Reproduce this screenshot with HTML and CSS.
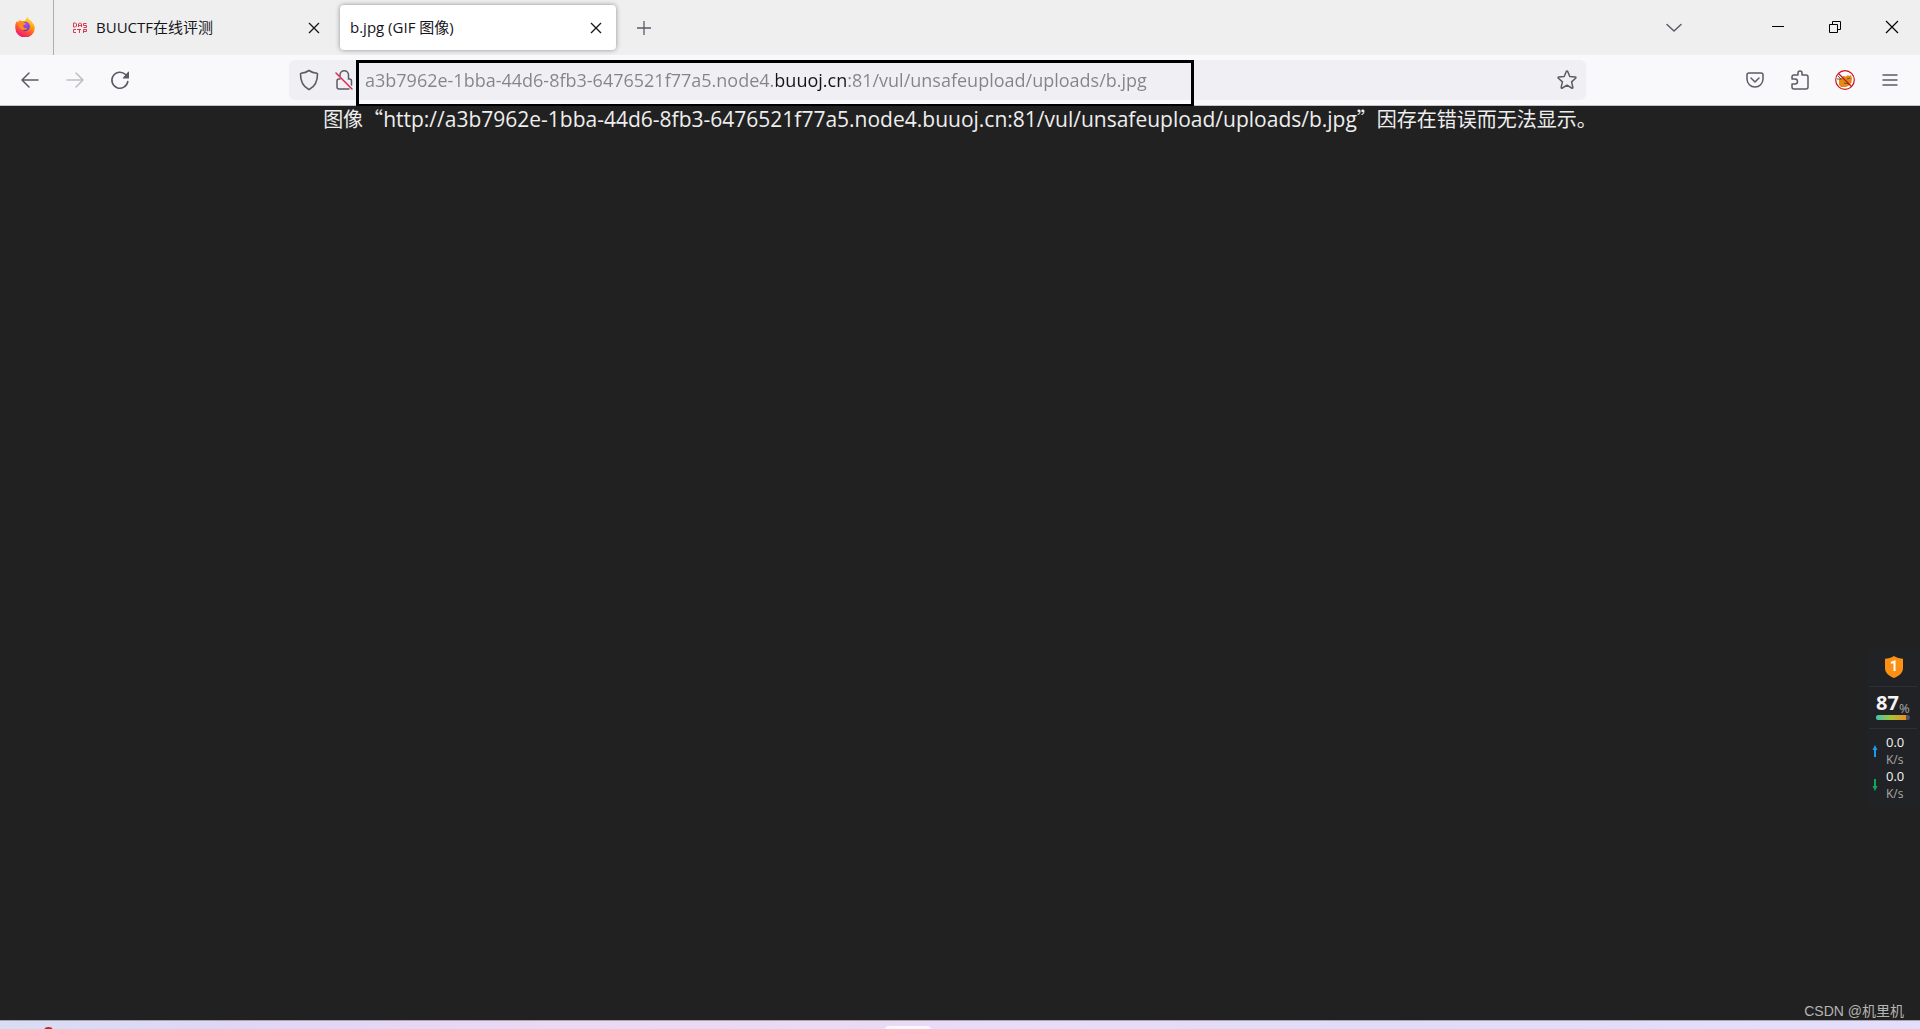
FILE: index.html
```html
<!DOCTYPE html>
<html lang="zh-CN">
<head>
<meta charset="utf-8">
<title>b.jpg (GIF 图像)</title>
<link rel="stylesheet" href="styles.css">
</head>
<body>
<header class="tabstrip">
  <button class="view-button" aria-label="Firefox View">
    <svg width="20" height="20" viewBox="0 0 20 20">
      <defs>
        <linearGradient id="flame" x1="0.8" y1="0" x2="0.3" y2="1"><stop offset="0" stop-color="#fff04a"/><stop offset="0.4" stop-color="#ff980e"/><stop offset="0.7" stop-color="#ff4a3c"/><stop offset="1" stop-color="#e8127f"/></linearGradient>
        <radialGradient id="globe" cx="0.6" cy="0.3" r="0.8"><stop offset="0" stop-color="#a94af5"/><stop offset="1" stop-color="#4f3fc4"/></radialGradient>
      </defs>
      <path fill="url(#flame)" d="M2 4l1 1.500L5 2.500l.5 1.500h3C10 4 10.500 3 11 2.500 11 1 12 .5 12.800 0c.2 2 1.500 2.300 2.700 3.700l1.500.3-.2 1.300c1.800 1.200 3 3.400 3 5.700A9.700 9.500 0 0 1 .3 11C0 8 .7 5.800 2 4z"/>
      <circle cx="10.200" cy="9.500" r="4.700" fill="url(#globe)"/>
      <path fill="#ff8b1f" d="M3 5c2-1.300 5-1.300 6.500.7l1.700.8c-.4 1.200-2.700 1.200-3 2.200.2 1.800 2 3 4.200 2-.8 2.300-5 3.300-7.200.8C3.500 9.700 3 7.500 3 5z"/>
    </svg>
  </button>
  <div class="tab tab-idle">
    <svg class="favicon" width="15" height="12" viewBox="0 0 15 12" fill="none" stroke="#d83a52"><path d="M1.500 1v4h2l1-1V2l-1-1zM6.500 5V2l1-1h1l1 1v3M6.500 3.500h3M14.500 1.500h-3v2h3v2h-3M4 7.500H1.500v3H4M5 7.500h4M7.500 7v4M11.500 11V7.500h3v2h-3"/></svg>
    <span class="tab-label">BUUCTF在线评测</span>
    <button class="tab-close" aria-label="关闭标签页"><svg width="12" height="12" viewBox="0 0 12 12" fill="none" stroke="#15141a" stroke-width="1.300"><path d="M1 1l10 10M11 1L1 11"/></svg></button>
  </div>
  <div class="tab tab-active">
    <span class="tab-label">b.jpg (GIF 图像)</span>
    <button class="tab-close" aria-label="关闭标签页"><svg width="12" height="12" viewBox="0 0 12 12" fill="none" stroke="#15141a" stroke-width="1.300"><path d="M1 1l10 10M11 1L1 11"/></svg></button>
  </div>
  <button class="tool new-tab" aria-label="新建标签页"><svg width="16" height="16" viewBox="0 0 16 16" fill="none" stroke="#5b5b66" stroke-width="1.300"><path d="M8 1v14M1 8h14"/></svg></button>
  <button class="tool all-tabs" aria-label="列出所有标签页"><svg width="16" height="10" viewBox="0 0 16 10" fill="none" stroke="#5b5b66" stroke-width="1.500" stroke-linecap="round" stroke-linejoin="round"><path d="M1 1.500l7 6.500 7-6.500"/></svg></button>
  <button class="window-button" aria-label="最小化"><svg width="12" height="12" viewBox="0 0 12 12" stroke="#000"><path d="M0 5.500h12"/></svg></button>
  <button class="window-button" aria-label="还原"><svg width="12" height="12" viewBox="0 0 12 12" fill="none" stroke="#000"><path d="M.5 3.500h8v8h-8zM3.500 3.500v-3h8v8h-3"/></svg></button>
  <button class="window-button" aria-label="关闭"><svg width="14" height="14" viewBox="0 0 14 14" fill="none" stroke="#000" stroke-width="1.200"><path d="M1 1l12 12M13 1L1 13"/></svg></button>
</header>

<nav class="toolbar">
  <button class="tool" aria-label="后退"><svg width="20" height="20" viewBox="0 0 20 20" fill="none" stroke="#5b5b66" stroke-width="1.500" stroke-linecap="round" stroke-linejoin="round"><path d="M18 10H2M9 3l-7 7 7 7"/></svg></button>
  <button class="tool" aria-label="前进" disabled><svg width="20" height="20" viewBox="0 0 20 20" fill="none" stroke="#bdbdc3" stroke-width="1.500" stroke-linecap="round" stroke-linejoin="round"><path d="M2 10h16M11 3l7 7-7 7"/></svg></button>
  <button class="tool" aria-label="重新载入"><svg width="20" height="20" viewBox="0 0 20 20" fill="none" stroke="#5b5b66" stroke-width="1.600" stroke-linecap="round"><path d="M17.800 11.500A8 8 0 1 1 15.500 4.500"/><path fill="#5b5b66" stroke="none" d="M19 2v6q0 .5-.5.500h-5.300q-.8 0-.3-.7L18.200 1.700q.8-.6.800.3z"/></svg></button>
  <div class="urlbar">
    <button class="url-icon" aria-label="跟踪保护"><svg width="20" height="22" viewBox="0 0 20 22" fill="none" stroke="#5b5b66" stroke-width="1.600" stroke-linejoin="round"><path d="M10 1.500c2.500 1.800 5 2.500 8 2.800.4 0 .5.400.5.800 0 7-1.500 12-8 15.200-.3.200-.7.200-1 0C3 17 1.500 12 1.500 5.100c0-.4.200-.8.500-.8 3-.3 5.500-1 8-2.800z"/></svg></button>
    <button class="url-icon" aria-label="连接不安全"><svg width="18" height="20" viewBox="0 0 18 20" fill="none" stroke-width="1.500" stroke-linecap="round"><path stroke="#5b5b66" d="M5 6V5a4 4 0 0 1 8.500 0v4h1q2 0 2 2v4M5 9H4q-2 0-2 2v6q0 2 2 2h10"/><path stroke="#e22850" d="M1 3l16 16"/></svg></button>
    <input class="url-field" type="text" aria-label="地址" spellcheck="false" value="a3b7962e-1bba-44d6-8fb3-6476521f77a5.node4.buuoj.cn:81/vul/unsafeupload/uploads/b.jpg">
    <button class="url-icon star" aria-label="添加书签"><svg width="20" height="20" viewBox="0 0 20 20" fill="none" stroke="#5b5b66" stroke-width="1.500" stroke-linejoin="round"><path d="M9.300 1.500q.7-1.200 1.400 0l2.100 5 5.400.5q1.300.3.400 1.300l-4 3.600 1.200 5.300q.1 1.400-1.200.8L10 15.200 5.400 18q-1.300.6-1.200-.8l1.200-5.300-4-3.600Q.5 7.300 1.800 7l5.400-.5z"/></svg></button>
    <div class="marker"></div>
  </div>
  <button class="tool" aria-label="Pocket"><svg width="18" height="16" viewBox="0 0 18 16" fill="none" stroke="#5b5b66" stroke-width="1.500" stroke-linecap="round" stroke-linejoin="round"><path d="M3 1h12q2 0 2 2v4a8 8 0 0 1-16 0V3q0-2 2-2z"/><path d="M5 6l4 4 4-4"/></svg></button>
  <button class="tool" aria-label="扩展"><svg width="18" height="20" viewBox="0 0 18 20" fill="none" stroke="#5b5b66" stroke-width="1.500" stroke-linejoin="round"><path d="M7 5V3a2 2 0 0 1 4 0v2h4q2 0 2 2v10q0 2-2 2H3q-2 0-2-2v-3h3a2 2 0 0 0 0-5H1V7q0-2 2-2z"/></svg></button>
  <button class="tool" aria-label="FoxyProxy"><svg width="20" height="20" viewBox="0 0 20 20"><circle cx="10" cy="10" r="9" fill="#fff"/><path fill="#e58a12" d="M6 9l2-3 3 .5L13 5l1 1 2-1 1 3.500-.5 4-2.500 3-3 1.500H6L4 15V9z"/><path stroke="#5f5544" fill="none" d="M2 9h5M3 6l3 3M9 13l5 1M12 9l3-1"/><circle cx="10" cy="10" r="9.300" fill="none" stroke="#d30c19" stroke-width="1.200"/><path stroke="#c01420" stroke-width="1.300" d="M3.500 3.500l13 13"/></svg></button>
  <button class="tool" aria-label="打开应用程序菜单"><svg width="16" height="12" viewBox="0 0 16 12" fill="none" stroke="#5b5b66" stroke-width="1.400" stroke-linecap="round"><path d="M1 1h14M1 6h14M1 11h14"/></svg></button>
</nav>

<main class="viewer">
  <p class="message">图像“<span class="latin">http://a3b7962e-1bba-44d6-8fb3-6476521f77a5.node4.buuoj.cn:81/vul/unsafeupload/uploads/b.jpg</span>”因存在错误而无法显示。</p>
  <aside class="monitor">
    <div class="shield-row">
      <svg width="20" height="24" viewBox="0 0 20 24"><path fill="#fb9014" d="M10 1c3 1.800 6 2.600 9 2.800V13c0 5-4 8-9 10-5-2-9-5-9-10V3.800C4 3.600 7 2.800 10 1z"/><path fill="none" stroke="#fff" stroke-width="2" d="M7 8l3.500-1.500V16"/></svg>
    </div>
    <div class="usage"><div class="usage-value">87<small>%</small></div><div class="usage-bar"><div class="usage-fill" style="width:87%"></div></div></div>
    <div class="speeds">
      <div class="speed"><svg width="6" height="12" viewBox="0 0 6 12" fill="#1b9bf0"><path d="M3 0l2.500 5H4v7H2V5H.5z"/></svg><div>0.0<span class="unit">K/s</span></div></div>
      <div class="speed"><svg width="6" height="12" viewBox="0 0 6 12" fill="#12a85c"><path d="M3 12l2.500-5H4V0H2v7H.5z"/></svg><div>0.0<span class="unit">K/s</span></div></div>
    </div>
  </aside>
  <div class="watermark">CSDN @机里机</div>
</main>

<footer class="taskbar">
  <span class="task-dot"></span>
  <span class="task-active"></span>
</footer>
</body>
</html>
```
FILE: styles.css
```css
* { box-sizing: border-box; }

body {
  margin: 0;
  min-height: 100vh;
  display: flex;
  flex-direction: column;
  overflow: hidden;
  background: #212121;
  font-family: "Open Sans", "Noto Sans CJK SC", sans-serif;
}

button {
  display: flex;
  align-items: center;
  justify-content: center;
  flex: none;
  padding: 0;
  border: 0;
  background: none;
}

svg { display: block; flex: none; }

/* Tabs */
.tabstrip {
  display: flex;
  align-items: center;
  height: 55px;
  background: #efefef;
}

.view-button {
  width: 54px;
  height: 55px;
  padding: 0 4px 2px 0;
  border-right: 1px solid #adadad;
}

.tab {
  display: flex;
  align-items: center;
  gap: 9px;
  width: 276px;
  height: 45px;
  padding: 0 10px;
  border-radius: 4px;
  font-size: 15px;
  line-height: 20px;
  color: #15141a;
}

.tab-idle {
  margin: 0 6px 0 4px;
  padding-left: 14px;
}

.tab-active {
  background: #fff;
  box-shadow: 0 0 5px rgba(0, 0, 0, 0.4);
}

.tab-label {
  flex: 1;
  padding-bottom: 2px;
  white-space: nowrap;
}

.tab-close { width: 20px; height: 20px; }

.tool { width: 45px; height: 40px; }

.new-tab { margin-left: 5px; }

.all-tabs { margin-left: auto; margin-right: 53px; }

.window-button { width: 57px; height: 55px; padding-bottom: 2px; }

/* Navigation */
.toolbar {
  display: flex;
  align-items: center;
  height: 51px;
  padding: 0 8px 0 7px;
  border-bottom: 1px solid #c4c4c8;
  background: #f9f9fb;
}

.urlbar {
  position: relative;
  display: flex;
  align-items: center;
  flex: 1;
  height: 40px;
  margin: 0 146px 0 147px;
  padding: 0 2px;
  border-radius: 6px;
  background: #f0eff4;
}

.url-icon { width: 35px; height: 36px; }

.star { margin-left: auto; }

.url-field {
  flex: 1;
  min-width: 0;
  height: 36px;
  margin-left: 4px;
  padding: 0;
  border: 0;
  outline: 0;
  font-family: inherit;
  font-size: 18px;
  color: #84838b;
  /* The registered domain is darker than the rest of the address. */
  background: linear-gradient(90deg, #84838b 411px, #15141a 411px, #15141a 481px, #84838b 481px);
  background-clip: text;
  -webkit-background-clip: text;
  -webkit-text-fill-color: transparent;
}

.marker {
  position: absolute;
  top: 0;
  left: 67px;
  width: 838px;
  height: 47px;
  border: 3px solid #000;
  pointer-events: none;
}

/* Image document */
.viewer {
  position: relative;
  flex: 1;
  background: #212121;
  color: #eee;
}

.message {
  margin: 0;
  font-size: 20px;
  line-height: 26px;
  text-align: center;
  font-family: "Noto Sans CJK SC", sans-serif;
}

.latin {
  font-family: "Open Sans", sans-serif;
  font-size: 21px;
}

.monitor {
  position: absolute;
  right: 0;
  top: 542px;
  width: 54px;
  padding: 0 3px;
  border-radius: 10px 0 0 10px;
  background: #202226;
  color: #f4f4f4;
}

.shield-row {
  display: flex;
  justify-content: center;
  height: 38px;
  padding: 7px 0 0 2px;
}

.usage {
  height: 43px;
  padding: 4px 7px 0;
  border-top: 1px solid #2b3134;
  border-bottom: 1px solid #2b3134;
}

.usage-value {
  display: flex;
  align-items: flex-end;
  height: 24px;
  font: bold 20px/24px "Open Sans", sans-serif;
}

.usage-value small {
  font-size: 13px;
  font-weight: normal;
  line-height: 14px;
  color: #aaa;
}

.usage-bar {
  height: 5px;
  border-radius: 3px;
  background: #50535c;
  overflow: hidden;
}

.usage-fill {
  height: 100%;
  background: linear-gradient(90deg, #40c4b0, #a8c23a, #f08c24);
}

.speeds { padding: 5px 0 6px 3px; }

.speed {
  display: flex;
  align-items: center;
  gap: 8px;
  height: 34px;
  font-size: 13px;
  line-height: 17px;
}

.unit { display: block; font-size: 12px; color: #aaa; }

.watermark {
  position: absolute;
  right: 16px;
  bottom: 0;
  font: 14px/17px "Liberation Sans", "Noto Sans CJK SC", sans-serif;
  color: #b4b4b4;
}

/* Top edge of the desktop taskbar */
.taskbar {
  position: relative;
  height: 9px;
  border-top: 1px solid #aaa5b0;
  background: linear-gradient(90deg, #d8def4, #dfd6f6 12%, #ecd8f2 30%, #e8dcf6 55%, #e0dcf7 70%, #e3defc);
  overflow: hidden;
}

.task-dot {
  position: absolute;
  left: 44px;
  top: 6px;
  width: 9px;
  height: 9px;
  border-radius: 4px;
  background: #c42b2b;
}

.task-active {
  position: absolute;
  left: 885px;
  top: 5px;
  width: 46px;
  height: 9px;
  border-radius: 4px;
  background: #faf7fd;
}
```
